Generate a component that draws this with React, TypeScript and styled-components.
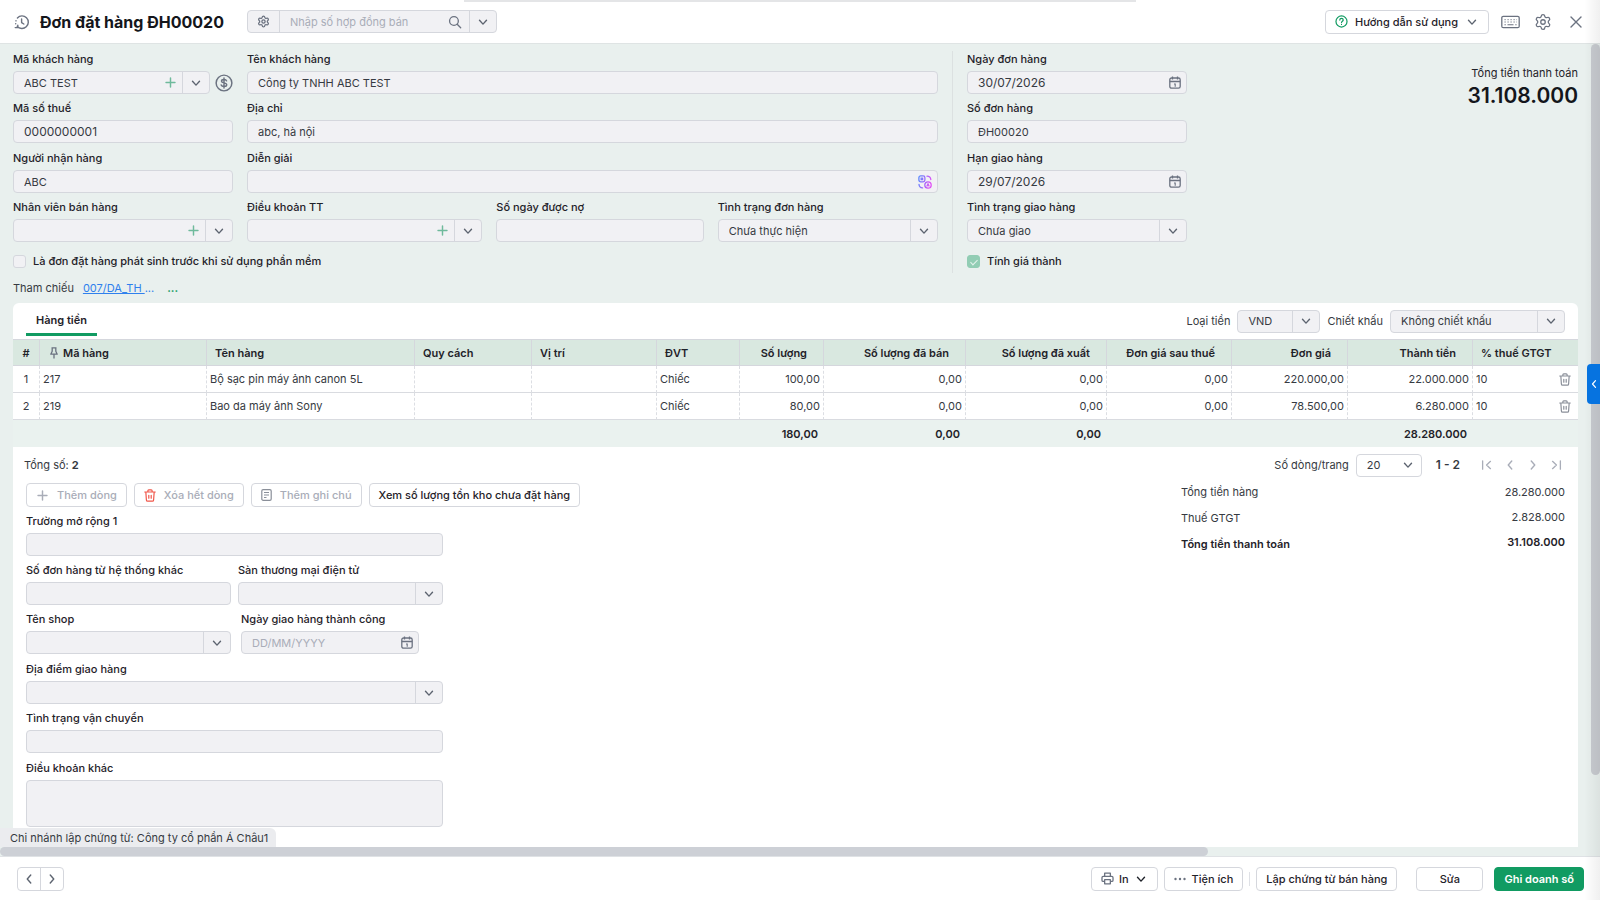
import React, { ReactNode, useId } from "react";
import styled, { createGlobalStyle, css } from "styled-components";
import { Settings } from "lucide-react";

const GlobalStyle = createGlobalStyle`
  *, *::before, *::after { box-sizing: border-box; }
  body { margin: 0; background: #fff; }
  body, button, input, select, textarea {
    font-family: Inter, "Liberation Sans", sans-serif;
    font-size: 11px;
    line-height: 16px;
    color: #1f2229;
  }
  button, input, select, textarea { margin: 0; }
`;

const c = {
  page: "#e9f0ee",
  field: "#f1f1f4",
  border: "#d5d7dd",
  green: "#119b62",
  paleGreen: "#6fba9c",
  icon: "#6b7280",
  mute: "#a9adb8",
};

/* ---------- icons ---------- */

type IconProps = { size?: number; color?: string; width?: number; children: ReactNode };
const Svg = ({ size = 16, color = c.icon, width = 1.5, children }: IconProps) => (
  <svg width={size} height={size} viewBox="0 0 16 16" fill="none" stroke={color} strokeWidth={width}
    strokeLinecap="round" strokeLinejoin="round" aria-hidden="true">
    {children}
  </svg>
);

const ChevronDown = ({ color = "#5d6470" }) => (
  <Svg size={14} color={color} width={1.6}><path d="M4 6l4 4.4L12 6" /></Svg>
);
const ChevronLeft = ({ color = "#5d6470", size = 14 }) => (
  <Svg size={size} color={color} width={1.6}><path d="M10 3.5L6 8l4 4.5" /></Svg>
);
const ChevronRight = ({ color = "#5d6470", size = 14 }) => (
  <Svg size={size} color={color} width={1.6}><path d="M6 3.5L10 8l-4 4.5" /></Svg>
);
const FirstIcon = () => <Svg size={14} color={c.mute}><path d="M3 3.2v9.6M12 3.8L7.5 8l4.500 4.200" /></Svg>;
const LastIcon = () => <Svg size={14} color={c.mute}><path d="M13 3.2v9.6M4 3.8L8.500 8 4 12.200" /></Svg>;
const PlusIcon = ({ color = c.paleGreen, size = 13 }) => (
  <Svg size={size} color={color} width={1.8}><path d="M8 2.5v11M2.5 8h11" /></Svg>
);
const HistoryIcon = () => (
  <Svg size={16} width={1.4}>
    <path d="M3.400 3.900A6.300 6.300 0 1 1 3.200 12.300M1.700 9.600v.1M2 6.800v.1M1.200 13.600h2.600v-2.400" />
    <path d="M7.600 5v3.600l2.200 1.400" />
  </Svg>
);
const SearchIcon = () => (
  <Svg size={14} width={1.5}><circle cx="6.800" cy="6.800" r="5" /><path d="M10.500 10.500L14.500 14.500" /></Svg>
);
const HelpIcon = () => (
  <Svg size={13} color={c.green} width={1.5}>
    <circle cx="8" cy="8" r="6.800" />
    <path d="M5.900 6.300c0-1.300 1-2.100 2.100-2.100s2.100.8 2.100 1.900C10.100 7.600 8 7.700 8 9.300M8 11.600v.1" />
  </Svg>
);
const KeyboardIcon = () => (
  <svg width="19" height="14" viewBox="0 0 19 14" fill="none" stroke={c.icon} strokeWidth="1.300" aria-hidden="true">
    <rect x="0.800" y="1.300" width="17.400" height="11.400" rx="1.500" />
    <path d="M3.500 4.700h12.500M3.500 7h12.500" strokeDasharray="1.200 1.800" strokeWidth="1" />
    <path d="M6.500 9.800h6M3.500 9.800h1.300M14.300 9.800h1.300" strokeWidth="1.100" />
  </svg>
);
const CloseIcon = () => <Svg size={16} width={1.4}><path d="M3 3l10 10M13 3L3 13" /></Svg>;
const DollarIcon = () => (
  <Svg size={18} width={1.3}>
    <circle cx="8" cy="8" r="7" />
    <path d="M10.300 6.100C10 5.200 9.100 4.900 8 4.900c-1.300 0-2.200.6-2.200 1.500C5.800 8.500 10.400 7.300 10.400 9.500c0 1-1 1.600-2.400 1.600-1.300 0-2.200-.5-2.500-1.400M8 3.600v8.800" />
  </Svg>
);
const CalendarIcon = () => (
  <svg width="12" height="13" viewBox="0 0 12 13" fill="none" stroke={c.icon} strokeWidth="1.300" aria-hidden="true">
    <rect x="0.800" y="2" width="10.400" height="10.200" rx="1.800" />
    <path d="M0.800 5.500h10.400M3.500 0.400v3M8.500 0.400v3" />
    <path d="M5 8h1.200v2.800" strokeWidth="1.100" />
  </svg>
);
const AssistIcon = () => (
  <svg width="14" height="14" viewBox="0 0 14 14" fill="none" strokeWidth="1.300" strokeLinecap="round" aria-hidden="true">
    <defs>
      <linearGradient id="assist" x1="0" y1="0" x2="14" y2="4" gradientUnits="userSpaceOnUse">
        <stop offset="0" stopColor="#4f8dff" /><stop offset="1" stopColor="#e04ff5" />
      </linearGradient>
    </defs>
    <g stroke="url(#assist)">
      <rect x="0.900" y="0.900" width="6" height="6" rx="1.800" />
      <rect x="3.200" y="3.200" width="1.400" height="1.400" />
      <circle cx="10" cy="10" r="3.200" />
      <path d="M9 11l1-2 1 2M9 1.200c2.200 0 3.600 1.200 3.800 3.300M1 9.300c.1 2.200 1.400 3.500 3.600 3.600" />
    </g>
  </svg>
);
const PinIcon = () => (
  <svg width="8" height="12" viewBox="0 0 8 12" fill="none" stroke={c.icon} strokeWidth="1.300" strokeLinejoin="round" aria-hidden="true">
    <path d="M1.500 0.800h5M2.200 0.800v3.500L0.800 7.200h6.400L5.800 4.300V0.800M4 7.200v4.300" />
  </svg>
);
const TrashIcon = ({ color = "#8a8f99" }) => (
  <svg width="12" height="13" viewBox="0 0 13 14" fill="none" stroke={color} strokeWidth="1.300"
    strokeLinecap="round" strokeLinejoin="round" aria-hidden="true">
    <path d="M0.800 3.200h11.400M4.200 3V1.800c0-.6.400-1 1-1h2.600c.6 0 1 .4 1 1V3M2 3.400l.6 8.400c0 .8.600 1.400 1.400 1.400h5c.8 0 1.400-.6 1.400-1.400L11 3.400M5.200 6.800v3.200M7.800 6.800v3.200" />
  </svg>
);
const NoteIcon = () => (
  <svg width="11" height="12" viewBox="0 0 11 12" fill="none" stroke="#8a8f99" strokeWidth="1.200" aria-hidden="true">
    <rect x="0.800" y="0.700" width="9.400" height="10.600" rx="1.300" />
    <path d="M3 3.500h5M3 6h5M3 8.500h2.500" />
  </svg>
);
const PrinterIcon = () => (
  <Svg size={13} width={1.6}>
    <path d="M4.500 5.500V1.500h7v4M4.500 11.500H2.700a1.500 1.500 0 0 1-1.500-1.500V7c0-.8.700-1.500 1.500-1.500h10.600c.8 0 1.500.7 1.500 1.500v3c0 .8-.7 1.500-1.500 1.500h-1.800M4.500 9.500h7v5h-7z" />
  </Svg>
);
const DotsIcon = () => (
  <svg width="12" height="4" viewBox="0 0 12 4" fill={c.icon} aria-hidden="true">
    <circle cx="1.500" cy="2" r="1.200" /><circle cx="6" cy="2" r="1.200" /><circle cx="10.500" cy="2" r="1.200" />
  </svg>
);

/* ---------- shared controls ---------- */

const box = css`
  height: 23px;
  border: 1px solid ${c.border};
  border-radius: 4px;
  background: ${c.field};
`;
const bare = css`
  flex: 1;
  min-width: 0;
  width: 100%;
  height: 100%;
  padding: 0 10px;
  border: 0;
  outline: 0;
  background: none;
  color: #363a42;
`;
const Box = styled.span<{ $white?: boolean }>`
  ${box}
  display: flex;
  align-items: center;
  flex: 1;
  min-width: 0;
  overflow: hidden;
  ${(p) => p.$white && "background: #fff;"}
`;
const TextInput = styled.input<{ $digits?: boolean }>`
  ${bare}
  ${(p) => p.$digits && "font-size: 12px;"}
  &::placeholder { font-size: 11px; color: ${c.mute}; opacity: 1; }
`;
const Select = styled.select`
  ${bare}
  appearance: none;
  opacity: 1;
`;
const ArrowCell = styled.span`
  display: grid;
  place-items: center;
  align-self: stretch;
  width: 27px;
  flex: none;
  border-left: 1px solid ${c.border};
`;
const IconButton = styled.button<{ $w?: number }>`
  display: grid;
  place-items: center;
  flex: none;
  width: ${(p) => p.$w ?? 24}px;
  height: 22px;
  padding: 0;
  border: 0;
  background: none;
`;
const ArrowButton = styled(IconButton)`
  width: 27px;
  border-left: 1px solid ${c.border};
`;
const FieldBlock = styled.div`
  display: flex;
  flex-direction: column;
  min-width: 0;
`;
const FieldLabel = styled.label`
  line-height: 16px;
  padding-bottom: 4px;
  font-weight: 500;
  white-space: nowrap;
`;
const ControlRow = styled.div`
  display: flex;
  align-items: center;
  gap: 4px;
`;

type Kind = "text" | "select" | "combo" | "date";
type FieldProps = {
  label: string; kind?: Kind; value?: string; placeholder?: string; inner?: ReactNode; after?: ReactNode;
};
const Field = ({ label, kind = "text", value = "", placeholder, inner, after }: FieldProps) => {
  const id = useId();
  return (
    <FieldBlock>
      <FieldLabel htmlFor={id}>{label}</FieldLabel>
      <ControlRow>
        <Box>
          {kind === "select"
            ? <><Select id={id}><option>{value}</option></Select><ArrowCell><ChevronDown /></ArrowCell></>
            : <TextInput id={id} defaultValue={value} placeholder={placeholder} $digits={/^[\d/]+$/.test(value)} />}
          {kind === "combo" && (
            <>
              <IconButton aria-label={`Thêm ${label}`}><PlusIcon /></IconButton>
              <ArrowButton aria-label={`Chọn ${label}`}><ChevronDown /></ArrowButton>
            </>
          )}
          {kind === "date" && <IconButton aria-label={`Chọn ${label}`} $w={22}><CalendarIcon /></IconButton>}
          {inner}
        </Box>
        {after}
      </ControlRow>
    </FieldBlock>
  );
};

const Button = styled.button<{ $muted?: boolean; $primary?: boolean; $gap?: number }>`
  display: flex;
  align-items: center;
  justify-content: center;
  gap: ${(p) => p.$gap ?? 6}px;
  height: 24px;
  padding: 0 9px;
  border: 1px solid ${(p) => (p.$primary ? c.green : c.border)};
  border-radius: 4px;
  background: ${(p) => (p.$primary ? c.green : "#fff")};
  color: ${(p) => (p.$primary ? "#fff" : p.$muted ? c.mute : "#1f2229")};
  font-weight: ${(p) => (p.$primary ? 600 : 500)};
  white-space: nowrap;
`;

/* ---------- page frame ---------- */

const Page = styled.div`
  position: relative;
  display: flex;
  flex-direction: column;
  min-height: 100vh;
  background: ${c.page};
`;
const EdgeShade = styled.div`
  position: absolute;
  inset: 0 0 0 auto;
  width: 16px;
  background: linear-gradient(to right, rgba(0, 0, 0, 0), rgba(0, 0, 0, 0.06));
  pointer-events: none;
`;
const TopProgress = styled.div`
  position: absolute;
  top: 0;
  left: 29%;
  width: 42%;
  height: 2px;
  background: #e4e5e7;
`;
const Header = styled.header`
  display: flex;
  align-items: center;
  height: 44px;
  padding: 0 12px 0 14px;
  background: #fff;
  border-bottom: 1px solid #dfe4e4;
`;
const Title = styled.h1`
  margin: 0 23px 0 10px;
  font-size: 16px;
  line-height: 24px;
  font-weight: 700;
  color: #14161b;
  white-space: nowrap;
`;
const SearchBox = styled.div`
  ${box}
  display: flex;
  align-items: center;
  width: 250px;
`;
const SettingsButton = styled(IconButton)`
  width: 32px;
  border-right: 1px solid ${c.border};
`;
const HeaderTools = styled.div`
  display: flex;
  align-items: center;
  gap: 9px;
  margin-left: auto;
`;

const Body = styled.div`
  display: flex;
  flex: 1;
  min-height: 0;
`;
const Content = styled.main`
  display: flex;
  flex-direction: column;
  flex: 1;
  min-width: 0;
  padding: 7px 13px 0;
`;
const VScroll = styled.div`
  flex: none;
  width: 9px;
`;
const VThumb = styled.div`
  height: 91%;
  border-radius: 5px;
  background: #c8cbd0;
`;
const HScroll = styled.div`
  height: 10px;
  padding-right: 392px;
  border-bottom: 1px solid #dfe2e5;
`;
const HThumb = styled.div`
  height: 9px;
  border-radius: 5px;
  background: #cdd0d6;
`;

/* ---------- general information ---------- */

const InfoGrid = styled.section`
  display: grid;
  grid-template-columns: 220px minmax(0, 691fr) 1px 220px minmax(0, 377fr);
  column-gap: 14px;
  height: 222px;
`;
const Stack = styled.div`
  display: flex;
  flex-direction: column;
  gap: 7px;
`;
const Group = styled.div`
  display: flex;
  flex-direction: column;
  gap: 6px;
`;
const TermsRow = styled.div`
  display: grid;
  grid-template-columns: 236fr 208fr 221fr;
  gap: 14px;
`;
const Divider = styled.div`
  background: #dce1e1;
`;
const CheckLabel = styled.label`
  display: flex;
  align-items: center;
  gap: 7px;
  margin-top: 4px;
  font-weight: 500;
  white-space: nowrap;
`;
const CheckBox = styled.input`
  appearance: none;
  display: grid;
  place-items: center;
  flex: none;
  width: 13px;
  height: 13px;
  border: 1px solid ${c.border};
  border-radius: 3px;
  background: ${c.field};
  &:checked {
    border-color: #92cdb4;
    background: #92cdb4;
  }
  &:checked::after {
    content: "";
    width: 4px;
    height: 7px;
    border: solid #e4f3ec;
    border-width: 0 1px 1px 0;
    transform: rotate(45deg);
  }
`;
const GrandTotal = styled.div`
  padding-top: 14px;
  text-align: right;
`;
const GrandValue = styled.div`
  font-size: 21px;
  line-height: 30px;
  font-weight: 600;
  color: #14161b;
`;
const Reference = styled.div`
  display: flex;
  align-items: center;
  height: 30px;
  color: #363a42;
`;
const RefLink = styled.a`
  margin: 0 13px 0 9px;
  color: #2f80ed;
  text-decoration: none;
  white-space: pre;
`;
const MoreLink = styled.a`
  color: ${c.green};
  font-weight: 700;
  text-decoration: none;
`;

/* ---------- item panel ---------- */

const Panel = styled.section`
  position: relative;
  flex: 1;
  border-radius: 6px 6px 0 0;
  background: #fff;
`;
const TabBar = styled.div`
  display: flex;
  align-items: center;
  height: 36px;
  padding: 0 13px;
`;
const Tab = styled.button`
  align-self: flex-start;
  height: 33px;
  padding: 3px 10px 0;
  border: 0;
  border-bottom: 3px solid ${c.green};
  background: none;
  font-weight: 600;
`;
const TabTools = styled.div`
  display: flex;
  align-items: center;
  gap: 7px;
  margin-left: auto;
`;
const InlineLabel = styled.label`
  color: #363a42;
`;
const Sized = styled.span<{ $w: number }>`
  display: flex;
  width: ${(p) => p.$w}px;
`;

const Table = styled.table`
  width: 100%;
  table-layout: fixed;
  border-collapse: separate;
  border-spacing: 0;
`;
const Th = styled.th<{ $num?: boolean; $tight?: boolean }>`
  height: 27px;
  padding: 0 ${(p) => (p.$tight ? 0 : p.$num ? 16 : 8)}px 0 ${(p) => (p.$tight ? 0 : 8)}px;
  border: solid ${c.border};
  border-width: 1px 1px 1px 0;
  background: #d9e8e0;
  text-align: ${(p) => (p.$tight ? "center" : p.$num ? "right" : "left")};
  font-weight: 600;
  white-space: nowrap;
  &:last-child { border-right: 0; }
`;
const PinnedName = styled.span`
  display: flex;
  align-items: center;
  gap: 5px;
  padding-left: 2px;
`;
const Td = styled.td<{ $num?: boolean; $tight?: boolean }>`
  height: 27px;
  padding: 0 ${(p) => (p.$tight ? 0 : 3)}px;
  border-right: 1px dashed #dcdee3;
  border-bottom: 1px solid #d9dbe0;
  text-align: ${(p) => (p.$tight ? "center" : p.$num ? "right" : "left")};
  color: #363a42;
  white-space: nowrap;
  &:last-child { border-right: 0; }
`;
const TaxCell = styled.div`
  display: flex;
  align-items: center;
  justify-content: space-between;
`;
const SumTd = styled.td`
  height: 27px;
  padding: 0 6px;
  background: #eaf2ef;
  text-align: right;
  font-weight: 600;
`;

const PagerBar = styled.div`
  display: flex;
  align-items: center;
  justify-content: space-between;
  height: 36px;
  padding: 0 11px;
  color: #363a42;
`;
const Pager = styled.div`
  display: flex;
  align-items: center;
  gap: 7px;
`;
const PageRange = styled.b`
  margin: 0 8px 0 7px;
  font-size: 12px;
  font-weight: 600;
`;
const PageButtons = styled.div`
  display: flex;
`;
const SelectArrow = styled.span`
  display: grid;
  padding-right: 6px;
`;

const Lower = styled.div`
  display: flex;
  justify-content: space-between;
  padding: 0 13px;
`;
const LowerLeft = styled.div`
  min-width: 0;
`;
const ActionRow = styled.div`
  display: flex;
  gap: 7px;
  padding-bottom: 6px;
`;
const ExtraForm = styled(Stack)`
  width: 417px;
`;
const Pair = styled.div`
  display: grid;
  grid-template-columns: 205px 205px;
  gap: 7px;
`;
const DatePair = styled(Pair)`
  grid-template-columns: 205px 178px;
  gap: 10px;
`;
const TextArea = styled.textarea`
  ${box}
  display: block;
  height: 47px;
  resize: none;
`;
const Totals = styled.div`
  display: flex;
  justify-content: space-between;
  width: 384px;
  color: #363a42;
`;
const TotalColumn = styled.div<{ $gap: number; $right?: boolean }>`
  display: flex;
  flex-direction: column;
  gap: ${(p) => p.$gap}px;
  line-height: 18px;
  text-align: ${(p) => (p.$right ? "right" : "left")};
`;
const Strong = styled.div`
  font-weight: 600;
  color: #1f2229;
`;
const Branch = styled.div`
  position: absolute;
  left: -13px;
  bottom: 0;
  height: 19px;
  padding: 0 8px 0 10px;
  border-radius: 0 6px 0 0;
  background: #ebecef;
  line-height: 20px;
  color: #363a42;
`;
const SideToggle = styled.button`
  position: absolute;
  top: 364px;
  right: 0;
  display: grid;
  place-items: center;
  width: 13px;
  height: 40px;
  padding: 0;
  border: 0;
  border-radius: 4px 0 0 4px;
  background: #0673e0;
`;

/* ---------- footer ---------- */

const Footer = styled.footer`
  display: flex;
  align-items: center;
  justify-content: space-between;
  height: 43px;
  padding: 0 16px 0 17px;
  background: #fff;
`;
const NavPair = styled.div`
  display: flex;
  border: 1px solid ${c.border};
  border-radius: 4px;
  button + button { border-left: 1px solid ${c.border}; }
`;
const FooterActions = styled.div`
  display: flex;
  align-items: center;
  gap: 6px;
`;
const FooterRule = styled.span`
  width: 1px;
  height: 14px;
  background: #dfe1e6;
`;
const EditButton = styled(Button)`
  width: 67px;
  margin: 0 5px 0 13px;
`;

const columns: { name: string; w: number; num?: boolean; tight?: boolean }[] = [
  { name: "#", w: 27, tight: true },
  { name: "Mã hàng", w: 167 },
  { name: "Tên hàng", w: 208 },
  { name: "Quy cách", w: 117 },
  { name: "Vị trí", w: 125 },
  { name: "ĐVT", w: 83 },
  { name: "Số lượng", w: 84, num: true },
  { name: "Số lượng đã bán", w: 142, num: true },
  { name: "Số lượng đã xuất", w: 141, num: true },
  { name: "Đơn giá sau thuế", w: 125, num: true },
  { name: "Đơn giá", w: 116, num: true },
  { name: "Thành tiền", w: 125, num: true },
  { name: "% thuế GTGT", w: 105 },
];
const totalWidth = columns.reduce((sum, col) => sum + col.w, 0);
const rows = [
  ["1", "217", "Bộ sạc pin máy ảnh canon 5L", "", "", "Chiếc", "100,00", "0,00", "0,00", "0,00", "220.000,00", "22.000.000", "10"],
  ["2", "219", "Bao da máy ảnh Sony", "", "", "Chiếc", "80,00", "0,00", "0,00", "0,00", "78.500,00", "6.280.000", "10"],
];
const sums = ["", "", "", "", "", "", "180,00", "0,00", "0,00", "", "", "28.280.000", ""];

const ItemTable = () => (
  <Table>
    <colgroup>
      {columns.map((col) => <col key={col.name} style={{ width: `${(col.w / totalWidth) * 100}%` }} />)}
    </colgroup>
    <thead>
      <tr>
        {columns.map((col) => (
          <Th key={col.name} $num={col.num} $tight={col.tight}>
            {col.name === "Mã hàng" ? <PinnedName><PinIcon />{col.name}</PinnedName> : col.name}
          </Th>
        ))}
      </tr>
    </thead>
    <tbody>
      {rows.map((row) => (
        <tr key={row[0]}>
          {row.map((cell, i) => (
            <Td key={i} $num={columns[i].num} $tight={columns[i].tight}>
              {i === row.length - 1 ? (
                <TaxCell>{cell}<IconButton aria-label="Xóa dòng" $w={20}><TrashIcon /></IconButton></TaxCell>
              ) : cell}
            </Td>
          ))}
        </tr>
      ))}
    </tbody>
    <tfoot>
      <tr>{sums.map((cell, i) => <SumTd key={i}>{cell}</SumTd>)}</tr>
    </tfoot>
  </Table>
);

export default function App() {
  return (
    <Page>
      <GlobalStyle />
      <Header>
        <HistoryIcon />
        <Title>Đơn đặt hàng ĐH00020</Title>
        <SearchBox>
          <SettingsButton aria-label="Thiết lập"><Settings size={13} strokeWidth={2.4} color={c.icon} /></SettingsButton>
          <TextInput aria-label="Số hợp đồng bán" placeholder="Nhập số hợp đồng bán" />
          <IconButton aria-label="Tìm" $w={28}><SearchIcon /></IconButton>
          <ArrowButton aria-label="Chọn"><ChevronDown /></ArrowButton>
        </SearchBox>
        <HeaderTools>
          <Button $gap={7}><HelpIcon />Hướng dẫn sử dụng<ChevronDown /></Button>
          <IconButton aria-label="Bàn phím"><KeyboardIcon /></IconButton>
          <IconButton aria-label="Cài đặt"><Settings size={18} strokeWidth={1.7} color={c.icon} /></IconButton>
          <IconButton aria-label="Đóng"><CloseIcon /></IconButton>
        </HeaderTools>
      </Header>

      <Body>
        <Content>
          <InfoGrid>
            <Stack>
              <Group>
                <Field label="Mã khách hàng" kind="combo" value="ABC TEST"
                  after={<IconButton aria-label="Công nợ" $w={19}><DollarIcon /></IconButton>} />
                <Field label="Mã số thuế" value="0000000001" />
              </Group>
              <Group>
                <Field label="Người nhận hàng" value="ABC" />
                <Field label="Nhân viên bán hàng" kind="combo" />
              </Group>
              <CheckLabel><CheckBox type="checkbox" />Là đơn đặt hàng phát sinh trước khi sử dụng phần mềm</CheckLabel>
            </Stack>
            <Stack>
              <Group>
                <Field label="Tên khách hàng" value="Công ty TNHH ABC TEST" />
                <Field label="Địa chỉ" value="abc, hà nội" />
              </Group>
              <Group>
                <Field label="Diễn giải" inner={<IconButton aria-label="Gợi ý diễn giải"><AssistIcon /></IconButton>} />
                <TermsRow>
                  <Field label="Điều khoản TT" kind="combo" />
                  <Field label="Số ngày được nợ" />
                  <Field label="Tình trạng đơn hàng" kind="select" value="Chưa thực hiện" />
                </TermsRow>
              </Group>
            </Stack>
            <Divider />
            <Stack>
              <Group>
                <Field label="Ngày đơn hàng" kind="date" value="30/07/2026" />
                <Field label="Số đơn hàng" value="ĐH00020" />
              </Group>
              <Group>
                <Field label="Hạn giao hàng" kind="date" value="29/07/2026" />
                <Field label="Tình trạng giao hàng" kind="select" value="Chưa giao" />
              </Group>
              <CheckLabel><CheckBox type="checkbox" defaultChecked />Tính giá thành</CheckLabel>
            </Stack>
            <GrandTotal>
              Tổng tiền thanh toán
              <GrandValue>31.108.000</GrandValue>
            </GrandTotal>
          </InfoGrid>

          <Reference>
            Tham chiếu
            <RefLink href="#ref"><u>007/DA_TH </u>...</RefLink>
            <MoreLink href="#more">...</MoreLink>
          </Reference>

          <Panel>
            <TabBar>
              <Tab>Hàng tiền</Tab>
              <TabTools>
                <InlineLabel htmlFor="currency">Loại tiền</InlineLabel>
                <Sized $w={83}>
                  <Box><Select id="currency"><option>VND</option></Select><ArrowCell><ChevronDown /></ArrowCell></Box>
                </Sized>
                <InlineLabel htmlFor="discount">Chiết khấu</InlineLabel>
                <Sized $w={175}>
                  <Box><Select id="discount"><option>Không chiết khấu</option></Select><ArrowCell><ChevronDown /></ArrowCell></Box>
                </Sized>
              </TabTools>
            </TabBar>

            <ItemTable />

            <PagerBar>
              <span>Tổng số: <b>2</b></span>
              <Pager>
                <InlineLabel htmlFor="page-size">Số dòng/trang</InlineLabel>
                <Sized $w={66}>
                  <Box $white>
                    <Select id="page-size"><option>20</option></Select>
                    <SelectArrow><ChevronDown /></SelectArrow>
                  </Box>
                </Sized>
                <PageRange>1 - 2</PageRange>
                <PageButtons>
                  <IconButton aria-label="Trang đầu" $w={23}><FirstIcon /></IconButton>
                  <IconButton aria-label="Trang trước" $w={23}><ChevronLeft color={c.mute} /></IconButton>
                  <IconButton aria-label="Trang sau" $w={23}><ChevronRight color={c.mute} /></IconButton>
                  <IconButton aria-label="Trang cuối" $w={23}><LastIcon /></IconButton>
                </PageButtons>
              </Pager>
            </PagerBar>

            <Lower>
              <LowerLeft>
                <ActionRow>
                  <Button $muted $gap={8}><PlusIcon color={c.mute} />Thêm dòng</Button>
                  <Button $muted $gap={8}><TrashIcon color="#f0564a" />Xóa hết dòng</Button>
                  <Button $muted $gap={8}><NoteIcon />Thêm ghi chú</Button>
                  <Button>Xem số lượng tồn kho chưa đặt hàng</Button>
                </ActionRow>
                <ExtraForm>
                  <Group>
                    <Field label="Trường mở rộng 1" />
                    <Pair>
                      <Field label="Số đơn hàng từ hệ thống khác" />
                      <Field label="Sàn thương mại điện tử" kind="select" />
                    </Pair>
                    <DatePair>
                      <Field label="Tên shop" kind="select" />
                      <Field label="Ngày giao hàng thành công" kind="date" placeholder="DD/MM/YYYY" />
                    </DatePair>
                  </Group>
                  <Group>
                    <Field label="Địa điểm giao hàng" kind="select" />
                    <Field label="Tình trạng vận chuyển" />
                  </Group>
                  <FieldBlock>
                    <FieldLabel htmlFor="terms">Điều khoản khác</FieldLabel>
                    <TextArea id="terms" />
                  </FieldBlock>
                </ExtraForm>
              </LowerLeft>
              <Totals>
                <TotalColumn $gap={8}>
                  <div>Tổng tiền hàng</div>
                  <div>Thuế GTGT</div>
                  <Strong>Tổng tiền thanh toán</Strong>
                </TotalColumn>
                <TotalColumn $gap={7} $right>
                  <div>28.280.000</div>
                  <div>2.828.000</div>
                  <Strong>31.108.000</Strong>
                </TotalColumn>
              </Totals>
            </Lower>
            <Branch>Chi nhánh lập chứng từ: Công ty cổ phần Á Châu1</Branch>
          </Panel>
        </Content>
        <VScroll><VThumb /></VScroll>
      </Body>
      <HScroll><HThumb /></HScroll>

      <Footer>
        <NavPair>
          <IconButton aria-label="Chứng từ trước" $w={22}><ChevronLeft /></IconButton>
          <IconButton aria-label="Chứng từ sau" $w={23}><ChevronRight /></IconButton>
        </NavPair>
        <FooterActions>
          <Button $gap={5}><PrinterIcon />In<ChevronDown color="#1f2229" /></Button>
          <Button><DotsIcon />Tiện ích</Button>
          <FooterRule />
          <Button>Lập chứng từ bán hàng</Button>
          <EditButton>Sửa</EditButton>
          <Button $primary>Ghi doanh số</Button>
        </FooterActions>
      </Footer>

      <TopProgress />
      <EdgeShade />
      <SideToggle aria-label="Mở bảng bên"><ChevronLeft color="#fff" size={12} /></SideToggle>
    </Page>
  );
}
